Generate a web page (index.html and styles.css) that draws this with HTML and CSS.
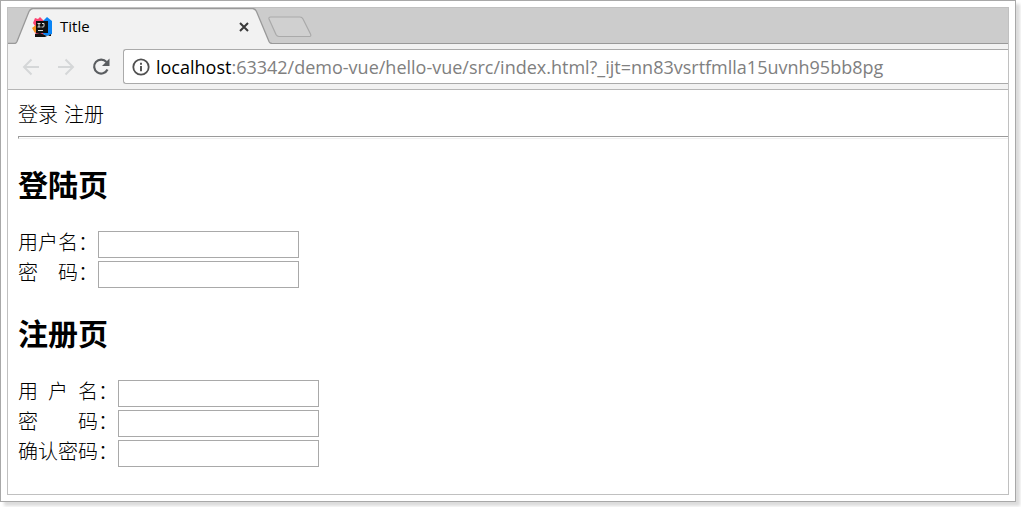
FILE: index.html
```html
<!DOCTYPE html>
<html lang="zh-CN">
<head>
<meta charset="utf-8">
<title>Title</title>
<link rel="stylesheet" href="styles.css">
</head>
<body>
<div class="frame">
  <div class="browser">
    <div class="tabstrip">
      <div class="tab">
        <svg class="tab-shape" viewBox="0 0 265 36" aria-hidden="true">
          <path d="M0 35.5H7.500Q9 35.500 10 33.500L22 3.500Q23.500 .5 26 .5H245.500Q248 .5 249.500 3.500L262 33.500Q263 35.500 265 35.500V36H0Z" fill="#f2f2f2"/>
          <path d="M0 35.500H7.500Q9 35.500 10 33.500L22 3.500Q23.500 .5 26 .5H245.500Q248 .5 249.500 3.500L262 33.500Q263 35.500 265 35.500" fill="none" stroke="#999" stroke-width="1.300"/>
        </svg>
        <svg class="favicon" viewBox="0 0 20 20" aria-hidden="true">
          <path d="M1 6L3 1l3 1 2-2 4 4v14l-8 1-1-5-2-2 2-3z" fill="#fc4370"/>
          <path d="M0 11l4-3 1 5-2 3z" fill="#f7941e"/>
          <path d="M11 4l4-4 5 4v13l-5 2-4-2z" fill="#0a84f5"/>
          <path d="M3 17l5-1 7 3-2 1H3zM16 19l3-2v2z" fill="#111"/>
          <rect x="4" y="4" width="12" height="12" fill="#101010"/>
          <path d="M5.500 6.500h3M7 6.500v3.500M5.500 10h3M10 6.500h2v2.500q0 1-1 1h-1.500M6 13.500h5" fill="none" stroke="#ddd" stroke-width="1"/>
        </svg>
        <span class="tab-title">Title</span>
        <button class="icon-button" type="button" aria-label="关闭标签页">
          <svg class="close-icon" viewBox="0 0 10 10"><path d="M1 1l8 8M9 1L1 9" fill="none" stroke="#3a3a3a" stroke-width="2"/></svg>
        </button>
      </div>
      <button class="icon-button new-tab" type="button" aria-label="新标签页">
        <svg class="new-tab-icon" viewBox="0 0 44 22"><path d="M2.500 1H32q2 0 3 2l7.500 15q1 2.500-1 2.500H11q-2 0-3-2L1 3Q.5 1 2.500 1z" fill="#d0d0d0" stroke="#aaa" stroke-width="1.200"/></svg>
      </button>
    </div>
    <div class="toolbar">
      <button class="icon-button" type="button" aria-label="后退">
        <svg class="nav-icon" viewBox="0 0 20 20"><path d="M18 10H3M10.500 2.500L3 10l7.500 7.500" fill="none" stroke="#d5d7d8" stroke-width="2"/></svg>
      </button>
      <button class="icon-button" type="button" aria-label="前进">
        <svg class="nav-icon" viewBox="0 0 20 20"><path d="M2 10h15M9.500 2.500L17 10l-7.500 7.500" fill="none" stroke="#d5d7d8" stroke-width="2"/></svg>
      </button>
      <button class="icon-button" type="button" aria-label="重新加载">
        <svg class="nav-icon" viewBox="0 0 20 20"><path d="M16.500 12.500A7 7 0 1 1 15.500 5" fill="none" stroke="#5a5d60" stroke-width="2.200"/><path d="M18.500 1.500V9H11z" fill="#5a5d60"/></svg>
      </button>
      <div class="address">
        <svg class="info-icon" viewBox="0 0 18 18" aria-hidden="true"><circle cx="9" cy="9" r="7.700" fill="none" stroke="#505050" stroke-width="1.800"/><path d="M9 8v5.200M9 4.800v2" stroke="#505050" stroke-width="1.900"/></svg>
        <div class="url" role="textbox" contenteditable="true" spellcheck="false" aria-label="地址"><span class="host">localhost</span>:63342/demo-vue/hello-vue/src/index.html?_ijt=nn83vsrtfmlla15uvnh95bb8pg</div>
      </div>
    </div>
    <main class="page">
      <nav class="links"><a href="#login">登录</a><a href="#register">注册</a></nav>
      <hr class="divider">
      <form class="panel" id="login">
        <h2 class="heading">登陆页</h2>
        <div class="row"><label for="login-name">用户名：</label><input class="field" id="login-name" type="text"></div>
        <div class="row"><label for="login-pass">密　码：</label><input class="field" id="login-pass" type="password"></div>
      </form>
      <form class="panel" id="register">
        <h2 class="heading">注册页</h2>
        <div class="row"><label for="reg-name">用&ensp;户&ensp;名：</label><input class="field" id="reg-name" type="text"></div>
        <div class="row"><label for="reg-pass">密　　码：</label><input class="field" id="reg-pass" type="password"></div>
        <div class="row"><label for="reg-confirm">确认密码：</label><input class="field" id="reg-confirm" type="password"></div>
      </form>
    </main>
  </div>
</div>
</body>
</html>
```
FILE: styles.css
```css
* { box-sizing: border-box; }

body {
  margin: 0;
  min-height: 100vh;
  display: flex;
  padding: 0 5px 5px 0;
  background: #fff;
  color: #000;
  font-family: "Open Sans", "Noto Sans CJK SC", sans-serif;
}

.frame {
  flex: 1;
  min-width: 0;
  display: flex;
  padding: 6px;
  border: 1px solid #a8a8a8;
  background: #fff;
  box-shadow: 4px 4px 3px #dcdcdc;
}

.browser {
  flex: 1;
  min-width: 0;
  border: 1px solid #c0c0c0;
  overflow: hidden;
}

.icon-button {
  display: flex;
  padding: 0;
  border: 0;
  background: none;
}

.tabstrip {
  display: flex;
  height: 36px;
  background: #ccc;
  box-shadow: inset 0 -1px #999;
}

.tab {
  position: relative;
  display: flex;
  align-items: center;
  width: 265px;
  margin-left: -1px;
  padding: 2px 23px 0 25px;
}

.tab-shape {
  position: absolute;
  inset: 0;
  width: 265px;
  height: 36px;
}

.favicon {
  position: relative;
  width: 20px;
  height: 20px;
}

.tab-title {
  position: relative;
  flex: 1;
  padding: 0 0 2px 8px;
  font-size: 15px;
  line-height: 20px;
}

.tab .icon-button { position: relative; }

.close-icon {
  width: 10px;
  height: 10px;
}

.new-tab {
  align-self: center;
  margin-left: -4px;
  padding-top: 2px;
}

.new-tab-icon {
  width: 44px;
  height: 22px;
}

.toolbar {
  display: flex;
  align-items: center;
  gap: 15px;
  height: 46px;
  padding-left: 13px;
  border-bottom: 1px solid #b6b6b6;
  background: #f2f2f2;
}

.nav-icon {
  width: 20px;
  height: 20px;
}

.address {
  flex: 1;
  min-width: 0;
  display: flex;
  align-items: center;
  gap: 6px;
  height: 35px;
  margin-left: -3px;
  padding-left: 8px;
  border: 1px solid #aaa;
  border-right: 0;
  border-radius: 3px 0 0 3px;
  background: #fff;
}

.info-icon {
  flex: none;
  width: 18px;
  height: 18px;
}

.url {
  flex: 1;
  min-width: 0;
  overflow: hidden;
  color: #808080;
  font-size: 18px;
  line-height: 28px;
  white-space: nowrap;
}

.host { color: #000; }

.page {
  padding: 10px 0 24px 10px;
  font-family: "Noto Sans CJK SC", sans-serif;
  font-size: 20px;
  font-weight: 300;
  line-height: 28px;
}

.links {
  display: flex;
  gap: 6px;
}

.links a {
  color: inherit;
  text-decoration: none;
}

.divider {
  height: 3px;
  margin: 8px 0 0;
  border: 1px solid #eee;
  border-top-color: #9a9a9a;
  border-left-color: #9a9a9a;
  border-right: 0;
}

.heading {
  margin: 24px 0 28px;
  font-size: 30px;
  font-weight: 700;
  line-height: 40px;
}

.row {
  display: flex;
  align-items: flex-start;
  height: 27px;
  margin-bottom: 3px;
}

.row label {
  line-height: 22px;
  white-space: pre;
}

.field {
  width: 201px;
  height: 27px;
  padding: 0 4px;
  border: 1px solid #a9a9a9;
  background: #fff;
  font: inherit;
}
```
